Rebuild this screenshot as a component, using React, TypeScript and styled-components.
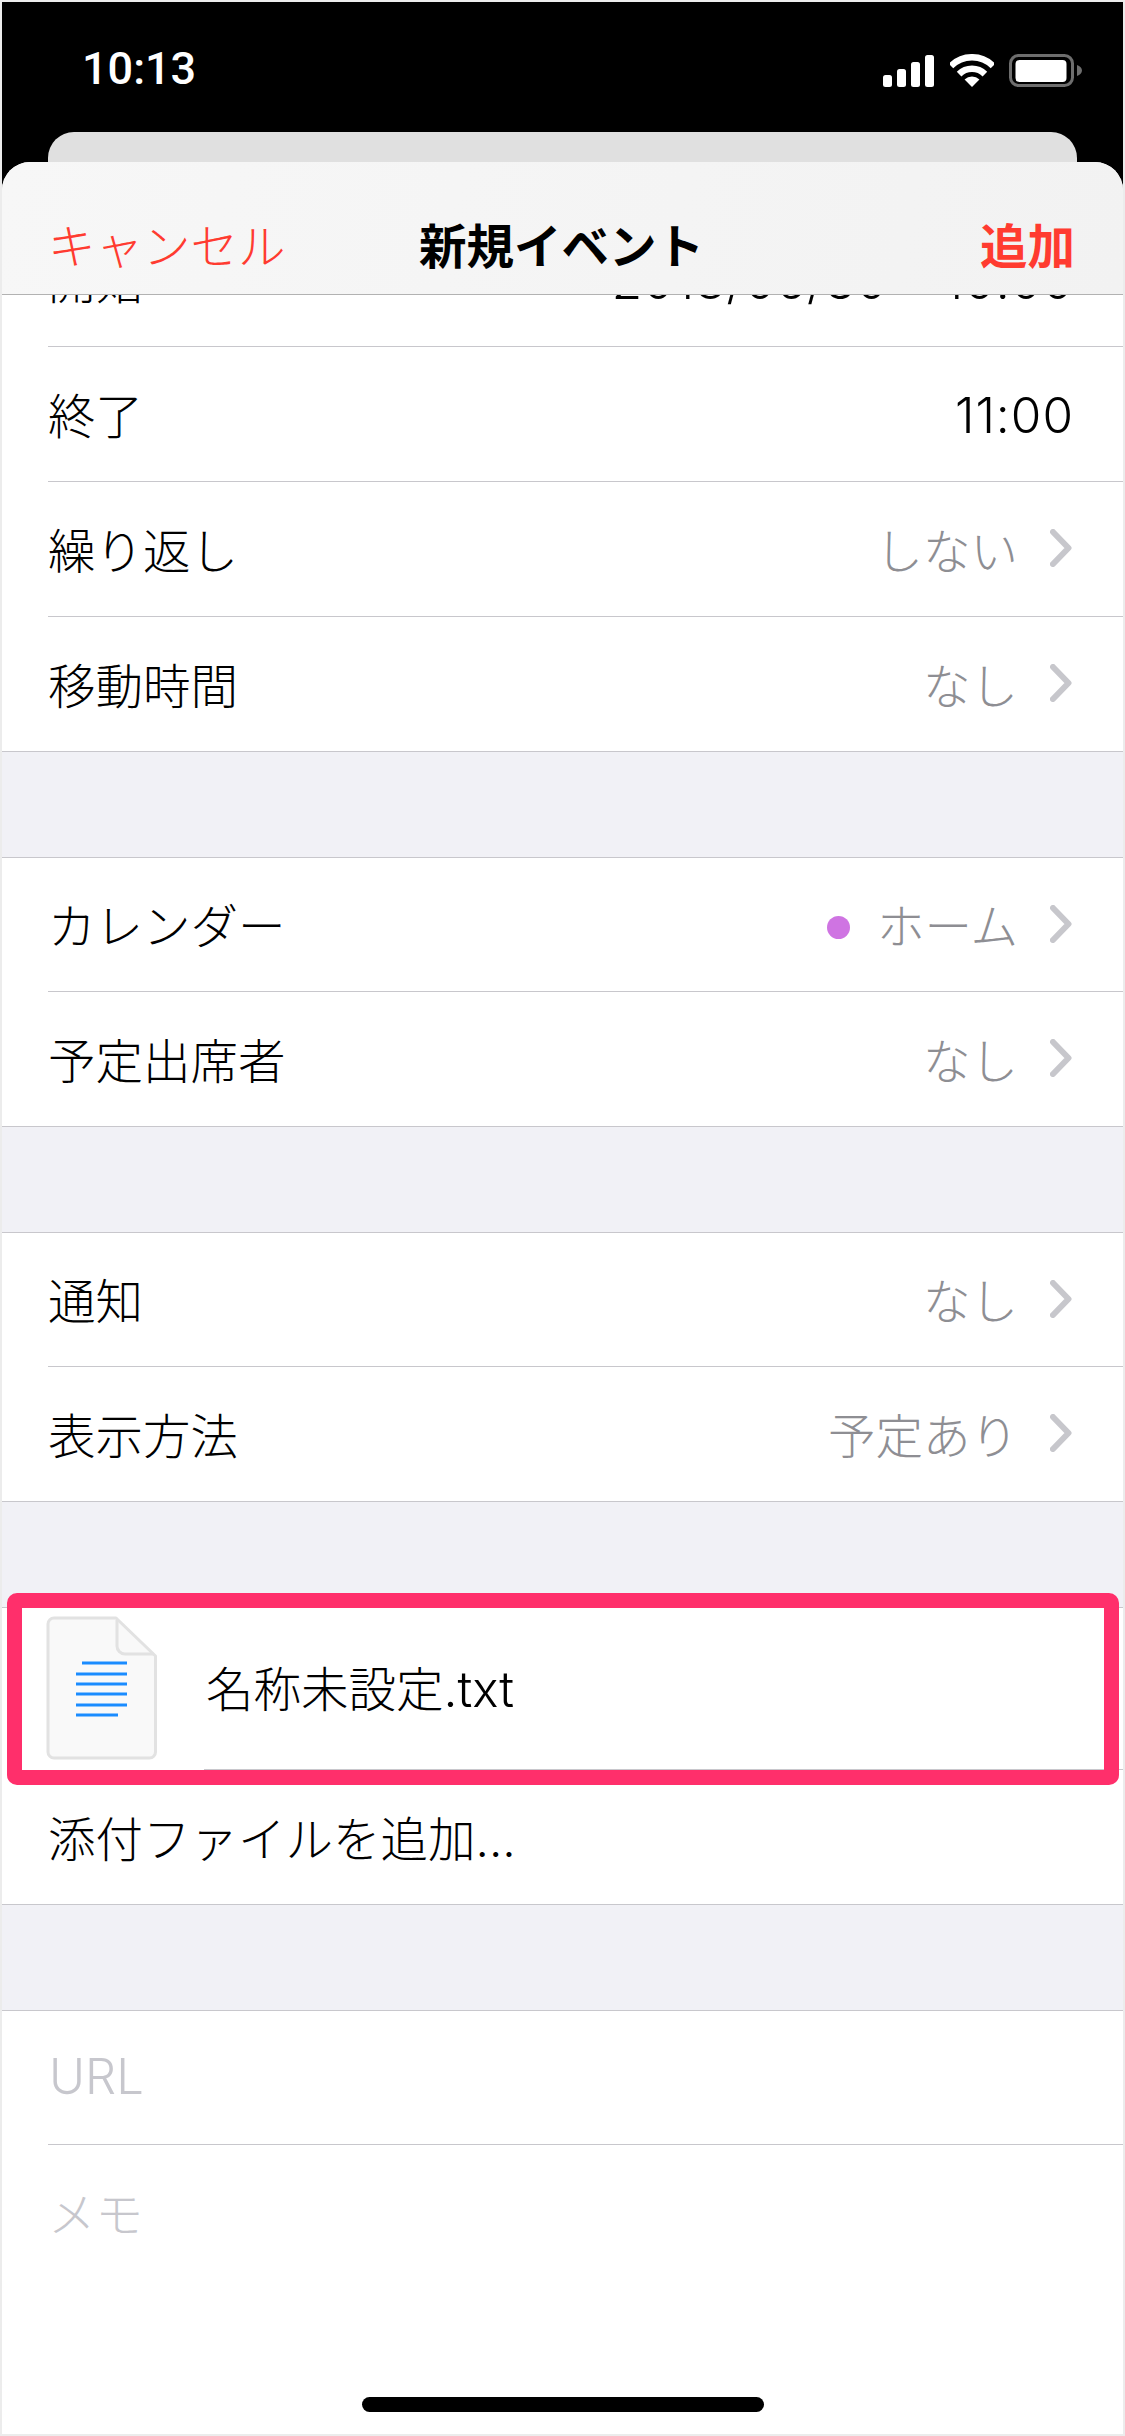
import React from "react";
import styled, { createGlobalStyle } from "styled-components";

const GlobalStyle = createGlobalStyle`
  html, body { margin: 0; padding: 0; background: #000; }
  * { box-sizing: border-box; }
`;

const STACK = `Inter, "Noto Sans CJK JP", sans-serif`;
const LINE = "#c8c7cc";

const Screen = styled.div`
  width: 1125px;
  height: 2436px;
  border: 2px solid #ececec;
  background: #000;
  display: flex;
  flex-direction: column;
  overflow: hidden;
  font-family: ${STACK};
`;

const StatusBar = styled.div`
  height: 130px;
  flex: none;
  display: flex;
  align-items: flex-start;
  justify-content: space-between;
  padding: 50px 40px 0 80px;
`;

const Clock = styled.span`
  color: #fff;
  font-family: Roboto, sans-serif;
  font-weight: 500;
  font-size: 45px;
  line-height: 34px;
`;

const StatusIcons = styled.div`
  display: flex;
  align-items: flex-start;
  gap: 15px;
`;

const BackSheet = styled.div`
  height: 30px;
  flex: none;
  margin: 0 46px;
  background: #e0e0e0;
  border-radius: 26px 26px 0 0;
`;

const Sheet = styled.div`
  position: relative;
  flex: 1;
  min-height: 0;
  display: flex;
  flex-direction: column;
  background: #fff;
  border-radius: 28px 28px 0 0;
  overflow: hidden;
`;

const Nav = styled.header`
  height: 133px;
  flex: none;
  display: grid;
  grid-template-columns: 1fr auto 1fr;
  align-items: center;
  padding: 32px 48px 2px;
  background: linear-gradient(100deg, #f7f7f7, #f2f2f2);
  border-bottom: 1px solid #b2b2b2;
  font-size: 47.5px;
`;

const Cancel = styled.span`
  color: #ff3b30;
  font-weight: 300;
  margin-left: -2px;
`;

const Title = styled.span`
  color: #000;
  font-weight: 700;
  margin-right: 2px;
`;

const Add = styled.span`
  color: #ff3b30;
  font-weight: 700;
  justify-self: end;
`;

const Scroll = styled.div`
  flex: 1;
  min-height: 0;
  overflow: hidden;
  background: #f1f1f6;
`;

const List = styled.div`
  margin-top: -82px;
  height: calc(100% + 82px);
  display: flex;
  flex-direction: column;
  gap: 105px;
`;

const Section = styled.section<{ $fill?: boolean; $noTop?: boolean }>`
  flex: ${(p) => (p.$fill ? "1" : "none")};
  background: #fff;
  border-top: ${(p) => (p.$noTop ? "none" : `1px solid ${LINE}`)};
`;

const Row = styled.div<{ $edge?: "inset" | "full" | "none" }>`
  height: 135px;
  display: flex;
  align-items: center;
  justify-content: space-between;
  font-size: 47.5px;
  font-weight: 300;
  color: #000;
  margin-left: ${(p) => (p.$edge === "full" ? "0" : "46px")};
  padding: 0 49px 2px ${(p) => (p.$edge === "full" ? "46px" : "0")};
  border-bottom: ${(p) => (p.$edge === "none" ? "none" : `1px solid ${LINE}`)};
  &:first-child { height: 134px; }
`;

const Placeholder = styled.span`
  color: #c7c7cd;
`;

const LatinPlaceholder = styled(Placeholder)`
  font-size: 49px;
  padding-left: 1px;
`;

const TimeValue = styled.span`
  display: flex;
  gap: 56px;
  font-size: 49.5px;
  font-weight: 350;
  letter-spacing: 1px;
  padding-top: 4px;
`;

const Extension = styled.span`
  font-size: 49.5px;
`;

const Value = styled.span`
  display: flex;
  align-items: center;
`;

const Detail = styled.span`
  color: #8e8e93;
`;

const Dot = styled.i<{ $color: string }>`
  width: 23px;
  height: 23px;
  border-radius: 50%;
  margin-right: 27px;
  margin-top: 8px;
  background: ${(p) => p.$color};
`;

const Chevron = styled.svg`
  width: 22px;
  height: 38px;
  margin-left: 32px;
  margin-right: 2px;
  flex: none;
`;

const AttachmentRow = styled.div`
  position: relative;
  height: 162px;
  display: flex;
  padding-left: 44px;
  font-size: 47.5px;
  font-weight: 300;
  color: #000;
`;

const FileIcon = styled.svg`
  width: 111px;
  height: 144px;
  margin-top: 8px;
  flex: none;
`;

const FileName = styled.div`
  flex: 1;
  margin-left: 47px;
  padding: 0 0 4px 2px;
  display: flex;
  align-items: baseline;
  align-content: center;
  flex-wrap: wrap;
  border-bottom: 1px solid ${LINE};
`;

const Highlight = styled.div`
  position: absolute;
  top: -15px;
  bottom: -15px;
  left: 5px;
  right: 4px;
  border: 15px solid #ff2f6b;
  border-radius: 10px;
  pointer-events: none;
`;

const HomeBar = styled.div`
  position: absolute;
  left: 360px;
  bottom: 22px;
  width: 402px;
  height: 15px;
  border-radius: 8px;
  background: #000;
`;

type Item = { label: string; value?: string; dot?: string };

const groupOne: Item[] = [
  { label: "繰り返し", value: "しない" },
  { label: "移動時間", value: "なし" },
];
const groupTwo: Item[] = [
  { label: "カレンダー", value: "ホーム", dot: "#cf74e2" },
  { label: "予定出席者", value: "なし" },
];
const groupThree: Item[] = [
  { label: "通知", value: "なし" },
  { label: "表示方法", value: "予定あり" },
];

const Arrow = () => (
  <Chevron viewBox="0 0 22 38" fill="none">
    <path d="M3 3 L18.5 19 L3 35" stroke="#c7c7cc" strokeWidth="6" strokeLinecap="round" strokeLinejoin="round" />
  </Chevron>
);

const DetailRow = ({ item, last }: { item: Item; last: boolean }) => (
  <Row $edge={last ? "full" : "inset"}>
    <span>{item.label}</span>
    <Value>
      {item.dot && <Dot $color={item.dot} />}
      <Detail>{item.value}</Detail>
      <Arrow />
    </Value>
  </Row>
);

const Signal = () => (
  <svg width="52" height="32" viewBox="0 0 52 32" fill="#fff" style={{ marginTop: 3 }}>
    <rect x="0" y="20" width="9" height="12" rx="2.5" />
    <rect x="14" y="14" width="9" height="18" rx="2.5" />
    <rect x="28" y="7" width="9" height="25" rx="2.5" />
    <rect x="42" y="0" width="9" height="32" rx="2.5" />
  </svg>
);

const Wifi = () => (
  <svg width="44" height="33" viewBox="0 0 44 33" fill="none" style={{ marginTop: 2 }}>
    <path d="M0.96 11.96 A29.75 29.75 0 0 1 43.04 11.96" stroke="#fff" strokeWidth="6.5" />
    <path d="M9.1 20.1 A18.25 18.25 0 0 1 34.9 20.1" stroke="#fff" strokeWidth="6.5" />
    <path d="M22 33 L14.58 25.58 A10.5 10.5 0 0 1 29.42 25.58 Z" fill="#fff" />
  </svg>
);

const Battery = () => (
  <svg width="74" height="33" viewBox="0 0 74 33" fill="none" style={{ marginTop: 2 }}>
    <rect x="1.5" y="1.5" width="62" height="30" rx="8" stroke="#6e6e6e" strokeWidth="3" />
    <rect x="6.5" y="6" width="51" height="22" rx="4" fill="#fff" />
    <path d="M68 11 C71 12 73 14 73 16.5 C73 19 71 21 68 22 Z" fill="#6e6e6e" />
  </svg>
);

const TextFile = () => (
  <FileIcon viewBox="0 0 111 144" fill="none">
    <path
      d="M8 2 H70 L109.5 40 V136 a6 6 0 0 1 -6 6 H8 a6 6 0 0 1 -6 -6 V8 a6 6 0 0 1 6 -6 Z"
      fill="#f9f9f9"
      stroke="#e2e2e2"
      strokeWidth="3"
      strokeLinejoin="round"
    />
    <path d="M71 4 V30 a8 8 0 0 0 8 8 H108" stroke="#e2e2e2" strokeWidth="3" />
    <g stroke="#1a8cff" strokeWidth="3">
      <path d="M36 47 H81" />
      <path d="M30 58 H81" />
      <path d="M30 68 H81" />
      <path d="M30 78 H81" />
      <path d="M30 89 H81" />
      <path d="M30 99 H72" />
    </g>
  </FileIcon>
);

export default function App() {
  return (
    <>
      <GlobalStyle />
      <Screen>
        <StatusBar>
          <Clock>10:13</Clock>
          <StatusIcons>
            <Signal />
            <Wifi />
            <Battery />
          </StatusIcons>
        </StatusBar>
        <BackSheet />
        <Sheet>
          <Nav>
            <Cancel>キャンセル</Cancel>
            <Title>新規イベント</Title>
            <Add>追加</Add>
          </Nav>
          <Scroll>
            <List>
              <Section $noTop>
                <Row $edge="inset">
                  <span>開始</span>
                  <TimeValue>
                    <span>2018/06/30</span>
                    <span>10:00</span>
                  </TimeValue>
                </Row>
                <Row $edge="inset">
                  <span>終了</span>
                  <TimeValue>11:00</TimeValue>
                </Row>
                {groupOne.map((item, i) => (
                  <DetailRow key={item.label} item={item} last={i === groupOne.length - 1} />
                ))}
              </Section>
              <Section>
                {groupTwo.map((item, i) => (
                  <DetailRow key={item.label} item={item} last={i === groupTwo.length - 1} />
                ))}
              </Section>
              <Section>
                {groupThree.map((item, i) => (
                  <DetailRow key={item.label} item={item} last={i === groupThree.length - 1} />
                ))}
              </Section>
              <Section>
                <AttachmentRow>
                  <TextFile />
                  <FileName>
                    <span>名称未設定</span>
                    <Extension>.txt</Extension>
                  </FileName>
                  <Highlight />
                </AttachmentRow>
                <Row $edge="full">
                  <span>添付ファイルを追加...</span>
                </Row>
              </Section>
              <Section $fill>
                <Row $edge="inset">
                  <LatinPlaceholder>URL</LatinPlaceholder>
                </Row>
                <Row $edge="none">
                  <Placeholder>メモ</Placeholder>
                </Row>
              </Section>
            </List>
          </Scroll>
          <HomeBar />
        </Sheet>
      </Screen>
    </>
  );
}
